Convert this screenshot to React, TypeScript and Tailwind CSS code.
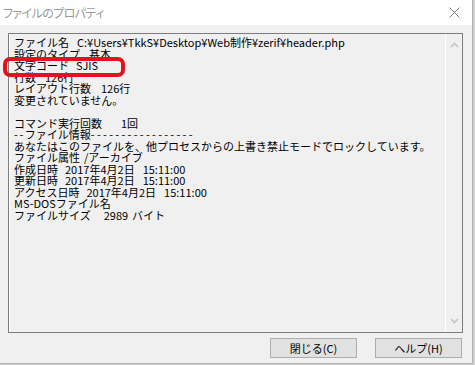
const jp = "font-['Noto_Sans_CJK_JP','Noto_Sans_CJK_SC',sans-serif]";

function Chevron({ up }: { up?: boolean }) {
  return (
    <svg width="9" height="6" viewBox="0 0 9 6" className="block">
      <path
        d={up ? "M1 5 L4.5 1.5 L8 5" : "M1 1 L4.5 4.5 L8 1"}
        fill="none"
        stroke="#c4c4c4"
        strokeWidth="1.6"
      />
    </svg>
  );
}

export default function App() {
  return (
    <div className={`relative flex h-[365px] w-[475px] overflow-hidden bg-[#cfcfcf] ${jp}`}>
      <div className="flex h-[364px] w-[473px] flex-col border-r border-b border-[#b4b4b4] bg-[#f0f0f0]">
        {/* title bar */}
        <div className="flex h-[25px] shrink-0 items-center justify-between bg-white pl-[3px] pr-[12px]">
          <span className="text-[12px] leading-none tracking-[-0.6px] text-[#9a9a9a] [font-feature-settings:'palt']">
            ファイルのプロパティ
          </span>
          <svg width="11" height="11" viewBox="0 0 11 11">
            <path d="M0.5 0.5 L10.5 10.5 M10.5 0.5 L0.5 10.5" stroke="#7a7a7a" strokeWidth="1" />
          </svg>
        </div>

        {/* list box */}
        <div className="mx-[8px] mt-[8px] flex h-[300px] w-[455px] shrink-0 border border-[#7c7c7c]">
          <div className="flex-1 border-l border-white pl-[4px] pt-[3px] text-[11px] leading-[11.5px] whitespace-pre text-black">
            <div>ファイル名<span className="ml-[8px]">C:¥Users¥TkkS¥Desktop¥Web制作¥zerif¥header.php</span></div>
            <div>設定のタイプ<span className="ml-[9px]">基本</span></div>
            <div>文字コード<span className="ml-[7px]">SJIS</span></div>
            <div>行数<span className="ml-[9px]">126行</span></div>
            <div>レイアウト行数<span className="ml-[10px]">126行</span></div>
            <div>変更されていません。</div>
            <div>&nbsp;</div>
            <div>コマンド実行回数<span className="ml-[19px]">1回</span></div>
            <div>
              <span className="tracking-[1.6px]">--</span>ファイル情報
              <span className="tracking-[2.3px]">-----------------</span>
            </div>
            <div>あなたはこのファイルを、他プロセスからの上書き禁止モードでロックしています。</div>
            <div>ファイル属性<span className="ml-[4px]">/アーカイブ</span></div>
            <div>作成日時<span className="ml-[7px]">2017年4月2日</span><span className="ml-[8px]">15:11:00</span></div>
            <div>更新日時<span className="ml-[7px]">2017年4月2日</span><span className="ml-[8px]">15:11:00</span></div>
            <div>アクセス日時<span className="ml-[7px]">2017年4月2日</span><span className="ml-[8px]">15:11:00</span></div>
            <div>MS-DOSファイル名</div>
            <div>ファイルサイズ<span className="ml-[13px]">2989</span><span className="ml-[4px]">バイト</span></div>
          </div>
          {/* scrollbar */}
          <div className="flex w-[17px] flex-col items-center justify-between border-l border-white py-[8px] pl-[1px]">
            <Chevron up />
            <Chevron />
          </div>
        </div>

        {/* buttons */}
        <div className="mt-[5px] flex justify-end gap-[18px] pr-[10px]">
          <button className="flex h-[20px] w-[87px] items-center justify-center border border-[#adadad] bg-[#e1e1e1] text-[11px] leading-none text-black">
            閉じる(C)
          </button>
          <button className="flex h-[20px] w-[87px] items-center justify-center border border-[#adadad] bg-[#e1e1e1] text-[11px] leading-none text-black">
            ヘルプ(H)
          </button>
        </div>
      </div>

      {/* red annotation */}
      <div className="absolute left-[3px] top-[57px] h-[20px] w-[122px] rounded-[7px] border-[4px] border-[#e2121e]" />
    </div>
  );
}
